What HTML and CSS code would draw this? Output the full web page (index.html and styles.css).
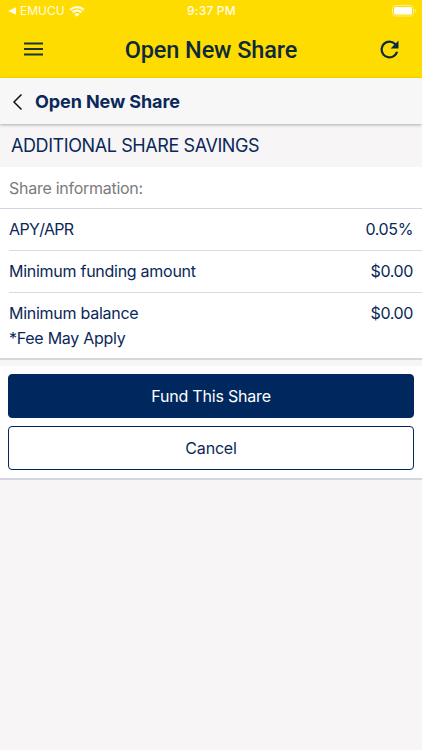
FILE: index.html
```html
<!DOCTYPE html>
<html lang="en">
<head>
<meta charset="utf-8">
<title>Open New Share</title>
<link rel="stylesheet" href="styles.css">
</head>
<body>
<header class="top">
  <div class="status">
    <div class="carrier">
      <svg class="back-app" width="8" height="8" viewBox="0 0 8 8"><path d="M8 .3v7.4L0 4z"/></svg>
      <span class="carrier-name">EMUCU</span>
      <svg class="wifi" width="16" height="12" viewBox="0 0 16 12"><path d="M.4 4a11 11 0 0 1 15.200 0L13.900 5.700a8.600 8.600 0 0 0-11.800 0zM2.800 6.600a7.400 7.400 0 0 1 10.400 0l-1.700 1.700a5 5 0 0 0-7 0zM5.400 9.200a3.700 3.700 0 0 1 5.200 0L8 11.800z"/></svg>
    </div>
    <span class="time">9:37 PM</span>
    <svg class="battery" width="25" height="12" viewBox="0 0 25 12"><rect class="battery-case" x=".5" y=".5" width="21" height="10.5" rx="3"/><rect x="2" y="2" width="18" height="7.5" rx="1.6"/><path class="battery-tip" d="M23 4v4q1.3-.6 1.3-2T23 4z"/></svg>
  </div>
  <nav class="appbar">
    <svg class="menu" width="19" height="14" viewBox="0 0 19 14"><path d="M0 1.500h19M0 7h19M0 12.500h19"/></svg>
    <h1 class="title">Open New Share</h1>
    <svg class="refresh" width="27" height="27" viewBox="0 0 24 24"><path d="M17.65 6.35A7.96 7.96 0 0 0 12 4a8 8 0 1 0 7.73 10h-2.08A6 6 0 1 1 12 6c1.66 0 3.14.69 4.22 1.78L13 11h7V4z"/></svg>
  </nav>
</header>
<div class="subbar">
  <svg class="chevron" width="11" height="18" viewBox="0 0 11 18"><path d="M9.500 1.500 2 9l7.500 7.500"/></svg>
  <h2 class="subtitle">Open New Share</h2>
</div>
<main>
  <h3 class="section">ADDITIONAL SHARE SAVINGS</h3>
  <section class="info">
    <div class="caption">Share information:</div>
    <div class="row"><span class="code">APY/APR</span><span class="value">0.05%</span></div>
    <div class="row"><span>Minimum funding amount</span><span class="value">$0.00</span></div>
    <div class="row last"><span>Minimum balance<br>*Fee May Apply</span><span class="value">$0.00</span></div>
  </section>
  <section class="actions">
    <button class="btn primary">Fund This Share</button>
    <button class="btn outline">Cancel</button>
  </section>
</main>
</body>
</html>
```

FILE: styles.css
```css
* { box-sizing: border-box; }
body {
  margin: 0;
  min-height: 750px;
  background: #f7f5f6;
  color: #0a2859;
  font: 16px/25px Inter, "Liberation Sans", sans-serif;
  letter-spacing: -.27px;
  white-space: nowrap;
}
h1, h2, h3 { margin: 0; }
svg { display: block; flex: none; }
.top { height: 78px; background: #ffdc00; }
.status {
  display: grid;
  grid-template-columns: 1fr auto 1fr;
  align-items: center;
  height: 22px;
  padding: 0 5px 0 8px;
  color: #fffbe0;
  fill: #fffbe0;
  font-size: 12px;
  line-height: 22px;
}
.carrier { display: flex; align-items: center; }
.carrier-name { margin-left: 4px; letter-spacing: 0; }
.wifi { margin-left: 4px; margin-top: -1px; }
.time { margin-left: -2px; font-weight: 500; font-size: 12px; letter-spacing: .2px; }
.battery { justify-self: end; fill: #fff; }
.battery-case { fill: none; stroke: #ffef8a; }
.battery-tip { fill: #ffef8a; }
.appbar {
  display: grid;
  grid-template-columns: 1fr auto 1fr;
  align-items: center;
  height: 56px;
  padding: 0 19px 0 24px;
}
.menu { margin-top: -2px; stroke: #1c3438; stroke-width: 2; fill: none; }
.title { margin-left: -5px; color: #0c2a3c; font: 500 23.5px/30px Roboto, sans-serif; letter-spacing: -.1px; }
.refresh { justify-self: end; margin-top: -1px; fill: #0c2a3c; }
.subbar {
  position: relative;
  display: flex;
  align-items: center;
  height: 46px;
  padding-left: 12px;
  background: #f8f7f8;
  box-shadow: 0 1px 3px rgba(0, 0, 0, .3);
}
.chevron { margin-top: 2px; fill: none; stroke: #111; stroke-width: 1.5; }
.subtitle { margin-left: 12px; font-size: 18px; font-weight: 700; letter-spacing: -.1px; }
.section {
  height: 43px;
  padding-left: 11px;
  font-size: 18px;
  font-weight: 400;
  letter-spacing: -.41px;
  line-height: 44px;
}
.info { background: #fff; border-bottom: 2px solid #d5d7df; }
.caption { height: 42px; padding: 9px 9px 7px; border-bottom: 1px solid #d3d5e0; color: #7b7b7b; }
.row {
  display: flex;
  justify-content: space-between;
  height: 42px;
  margin-left: 9px;
  padding: 8px 9px 8px 0;
  border-bottom: 1px solid #d9dae2;
}
.row.last { height: 65px; border-bottom: 0; }
.code { letter-spacing: -.65px; }
.value { letter-spacing: -.38px; }
.actions {
  display: flex;
  flex-direction: column;
  gap: 8px;
  margin-top: 6px;
  padding: 8px 8px 8px;
  background: #fff;
  border-bottom: 2px solid #d3d6e0;
}
.btn {
  height: 44px;
  padding: 0;
  border: 1px solid #00285e;
  border-radius: 4px;
  background: #fff;
  color: #0a2859;
  font: inherit;
  letter-spacing: -.2px;
}
.primary { background: #00285e; color: #fff; }
```
